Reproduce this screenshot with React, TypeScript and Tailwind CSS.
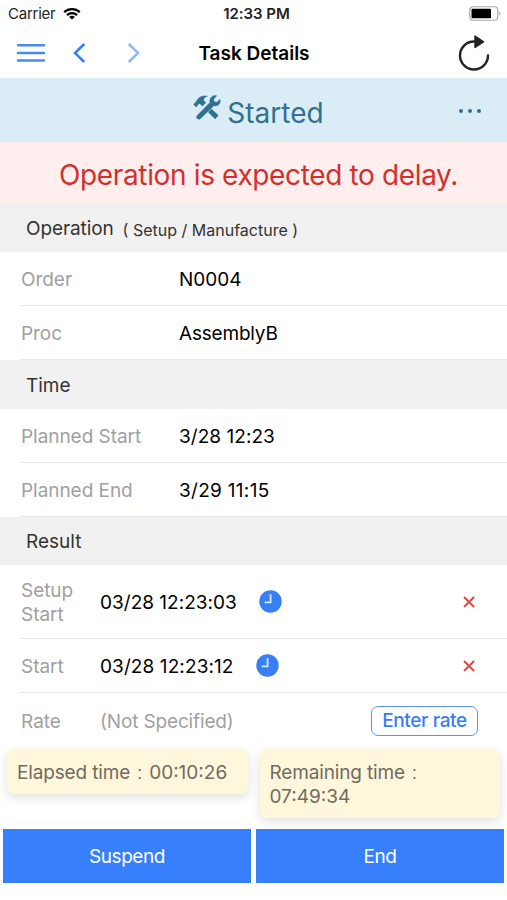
import type { ReactNode } from 'react';

interface RowProps {
  label: ReactNode;
  children: ReactNode;
  height: string;
  last?: boolean;
}

interface Result {
  label: string;
  time: string;
  height: string;
  tracking: string;
}

const results: Result[] = [
  { label: 'Setup Start', time: '03/28 12:23:03', height: 'h-[74px]', tracking: 'tracking-[0.02px]' },
  { label: 'Start', time: '03/28 12:23:12', height: 'h-[54px]', tracking: 'tracking-[0.1px]' },
];

function WifiIcon() {
  return (
    <svg width="18" height="13" viewBox="0 0 18 13" fill="none" stroke="#000" strokeWidth="2.3">
      <path d="M1.2 5.2C5.6 1 12.4 1 16.8 5.2" />
      <path d="M4 8.1C6.8 5.4 11.2 5.4 14 8.1" />
      <path d="M9 12.6 6.2 9.9C7.8 8.5 10.2 8.5 11.8 9.9Z" fill="#000" stroke="none" />
    </svg>
  );
}

function BatteryIcon() {
  return (
    <svg width="32" height="15" viewBox="0 0 32 15">
      <rect x="0.75" y="0.75" width="28" height="13.5" rx="3.5" fill="#fff" stroke="#a8a8a8" strokeWidth="1.2" />
      <rect x="2.5" y="2.7" width="19.5" height="9.6" rx="1" fill="#000" />
      <path d="M30.2 5.2C31.8 6 31.8 9 30.2 9.8Z" fill="#a8a8a8" />
    </svg>
  );
}

function ToolsIcon() {
  return (
    <svg
      className="relative -top-[3px]"
      width="28"
      height="25"
      viewBox="0 0 28 25"
      fill="#31708f"
      stroke="#31708f"
      strokeWidth="0.5"
      strokeLinejoin="round"
    >
      <path d="M0.5 9.4 3.6 6.2C5 2.6 9 0.2 14.4 1.2 11.4 2.2 10.2 3.8 10.8 5.4L12.8 7.8 9.4 11 7 8.8C6 8.4 5.2 8.8 5 9.6L3.4 12Z" />
      <path d="M18.4 14 25.2 20.2 22.2 24 15.4 17.2Z" />
      <path d="M23.6 0.8 20.6 4.4 21.2 6.8 23.8 7.2 27 4.4C28 8.8 24.8 11.6 20.8 10.8L7.6 23.6C5.4 25.6 2.2 22.8 4.2 20.6L17 7.4C16 3.2 19.6 -0.2 23.6 0.8Z" />
    </svg>
  );
}

function ClockIcon() {
  return (
    <svg width="23" height="23" viewBox="0 0 23 23">
      <circle cx="11.5" cy="11.5" r="11.2" fill="#387ef5" />
      <path d="M11.6 4.3V12.3H5.6" fill="none" stroke="#dceaff" strokeWidth="1.8" />
    </svg>
  );
}

function SectionHeader({ children, height }: { children: ReactNode; height: string }) {
  return <h2 className={`flex shrink-0 items-center bg-[#f1f1f1] pt-[3px] pl-[26px] text-[19px] text-[#333] ${height}`}>{children}</h2>;
}

function Row({ label, children, height, last }: RowProps) {
  return (
    <div className={`ml-5 flex shrink-0 items-center ${last ? '' : 'border-b border-[#e6e6e6]'} ${height}`}>
      {label}
      {children}
    </div>
  );
}

function DetailRow({ label, value, tracking = '' }: { label: string; value: string; tracking?: string }) {
  return (
    <Row height="h-[54px]" label={<span className="w-[159px] pt-1 pl-px tracking-[-0.05px] text-[#a0a0a0]">{label}</span>}>
      <span className={`pt-1 text-black ${tracking}`}>{value}</span>
    </Row>
  );
}

export default function App() {
  return (
    <div className="flex h-[900px] w-[507px] flex-col overflow-hidden bg-white font-['Inter',sans-serif] text-[19px]">
      <div className="grid h-[27px] shrink-0 grid-cols-3 items-center pr-[6px] pl-2 text-[15px]">
        <div className="flex items-center gap-2 text-[#222]">
          <span className="pt-0.5 tracking-[-0.25px]">Carrier</span>
          <WifiIcon />
        </div>
        <span className="pt-0.5 pl-1 text-center font-semibold tracking-[-0.05px] text-[#222]">12:33 PM</span>
        <div className="flex justify-end">
          <BatteryIcon />
        </div>
      </div>

      <header className="grid h-[51px] shrink-0 grid-cols-3 items-center pr-4 pl-4">
        <div className="flex items-center">
          <svg width="30" height="20" viewBox="0 0 30 20" stroke="#4a8af5" strokeWidth="2.5" strokeLinecap="round">
            <path d="M2 2.3H28M2 10H28M2 17.5H28" />
          </svg>
          <svg className="ml-[27px]" width="13" height="20" viewBox="0 0 13 20" fill="none" stroke="#387ef5" strokeWidth="2.5">
            <path d="M11.2 1 2 10 11.2 19" />
          </svg>
          <svg className="ml-[41px]" width="13" height="20" viewBox="0 0 13 20" fill="none" stroke="#8fb6fa" strokeWidth="2.5">
            <path d="M1.8 1 11 10 1.8 19" />
          </svg>
        </div>
        <h1 className="pt-[3px] pl-px text-center font-semibold whitespace-nowrap text-black">Task Details</h1>
        <div className="flex justify-end">
          <svg width="34" height="36" viewBox="0 0 34 36" fill="none" stroke="#222" strokeWidth="2.4">
            <path d="M17 6.5A14 14 0 1 0 31 20.5" strokeLinecap="round" />
            <path d="M18 1V12.5L26.6 6.8Z" fill="#222" strokeWidth="1.4" strokeLinejoin="round" />
          </svg>
        </div>
      </header>

      <div className="grid h-16 shrink-0 grid-cols-[1fr_auto_1fr] items-center bg-[#daecf6] text-[28px] text-[#31708f]">
        <span />
        <div className="flex items-center gap-[6px] pl-[10px]">
          <ToolsIcon />
          <span className="pt-[5px]">Started</span>
        </div>
        <div className="flex justify-end gap-[5px] pt-0.5 pr-[26px]">
          <i className="size-1 rounded-full bg-[#31708f]" />
          <i className="size-1 rounded-full bg-[#31708f]" />
          <i className="size-1 rounded-full bg-[#31708f]" />
        </div>
      </div>

      <div className="flex h-[62px] shrink-0 items-center justify-center bg-[#ffeeee] pt-[3px] pl-[10px] text-[28px] tracking-[-0.36px] whitespace-nowrap text-[#d0312f]">
        Operation is expected to delay.
      </div>

      <SectionHeader height="h-12">
        <span className="tracking-[-0.1px]">Operation</span>
        <span className="ml-[9px] text-base">( Setup / Manufacture )</span>
      </SectionHeader>
      <DetailRow label="Order" value="N0004" />
      <DetailRow label="Proc" value="AssemblyB" tracking="tracking-[-0.2px]" />

      <SectionHeader height="h-[49px]">Time</SectionHeader>
      <DetailRow label="Planned Start" value="3/28 12:23" tracking="tracking-[0.05px]" />
      <DetailRow label="Planned End" value="3/29 11:15" tracking="tracking-[0.3px]" />

      <SectionHeader height="h-12">Result</SectionHeader>
      {results.map((result) => (
        <Row
          key={result.label}
          height={result.height}
          label={<span className="w-20 pt-[3px] pr-4 pl-px leading-6 tracking-[-0.05px] text-[#a0a0a0]">{result.label}</span>}
        >
          <span className={`pt-[3px] text-black ${result.tracking}`}>{result.time}</span>
          <span className="ml-[22px]">
            <ClockIcon />
          </span>
          <svg className="mr-8 ml-auto" width="12" height="12" viewBox="0 0 12 12" stroke="#e8413e" strokeWidth="1.8">
            <path d="M1 1 11 11M11 1 1 11" />
          </svg>
        </Row>
      ))}
      <Row height="h-14" last label={<span className="w-20 pt-0.5 pl-px text-[#a0a0a0]">Rate</span>}>
        <span className="pt-0.5 tracking-[-0.15px] text-[#a0a0a0]">(Not Specified)</span>
        <button className="mr-[29px] ml-auto h-[30px] w-[107px] rounded-[7px] border-[1.5px] border-[#5b93f2] font-medium tracking-[-0.35px] whitespace-nowrap text-[#387ef5]">
          Enter rate
        </button>
      </Row>

      <div className="flex h-20 shrink-0 items-start gap-3 px-[7px] leading-[24px] text-[#6f6c60]">
        <div className="h-[45px] w-[241px] rounded-lg bg-[#fff7dc] px-[10px] pt-3 whitespace-nowrap shadow-[0_4px_12px_rgba(0,0,0,0.12)]">
          <span className="tracking-[-0.15px]">Elapsed time</span>
          <span className="inline-block w-[19px] text-center font-light">:</span>00:10:26
        </div>
        <div className="h-[69px] w-[241px] rounded-lg bg-[#fff7dc] px-[10px] pt-3 shadow-[0_4px_12px_rgba(0,0,0,0.12)]">
          <span className="tracking-[-0.15px]">Remaining time</span>
          <span className="inline-block w-[19px] text-center font-light">:</span>
          <br />
          07:49:34
        </div>
      </div>

      <div className="flex h-[54px] shrink-0 gap-[5px] px-[3px]">
        <button className="flex-1 bg-[#387ffe] pt-0.5 tracking-[-0.45px] text-white">Suspend</button>
        <button className="flex-1 bg-[#387ffe] pt-0.5 tracking-[-0.4px] text-white">End</button>
      </div>
    </div>
  );
}
